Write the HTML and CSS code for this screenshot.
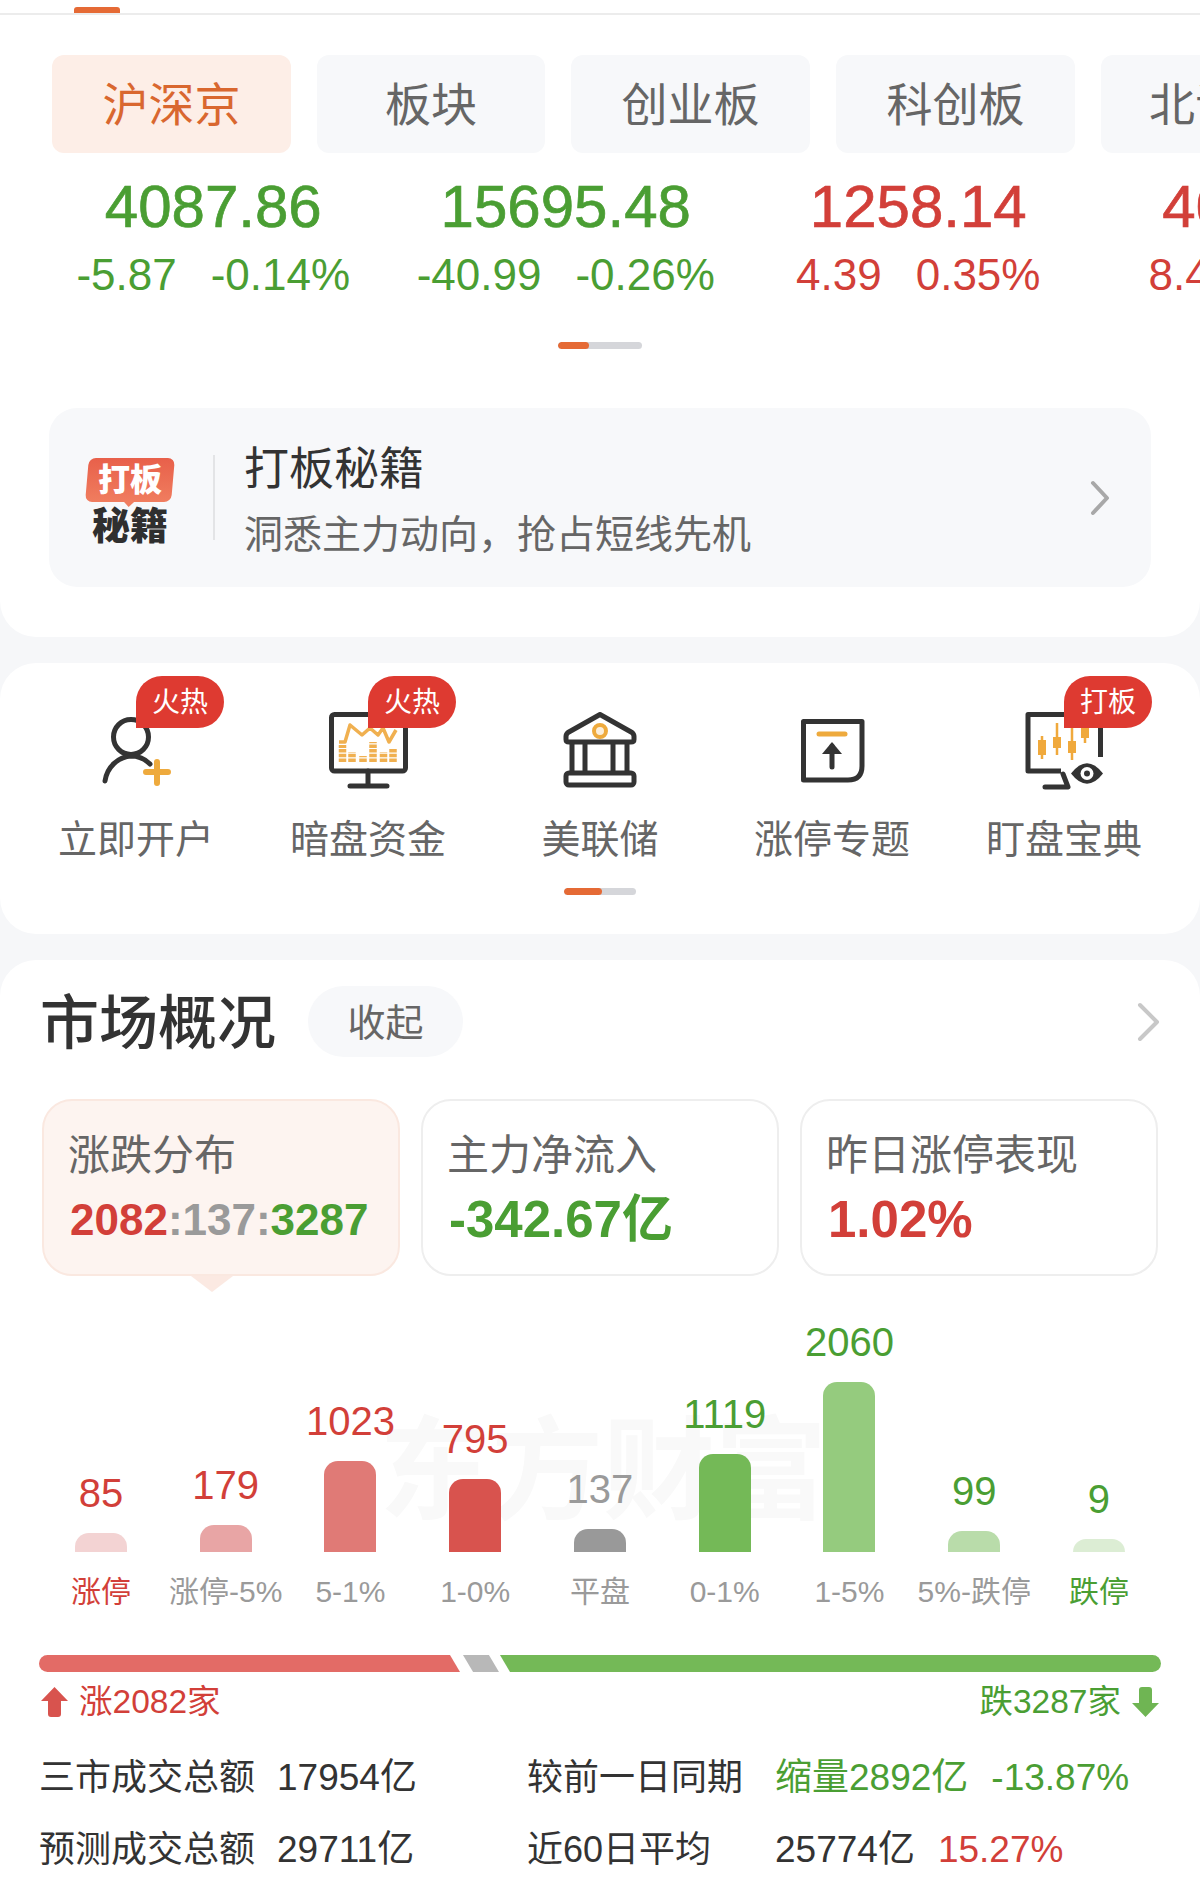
FILE: index.html
```html
<!DOCTYPE html>
<html lang="zh-CN">
<head>
	<meta charset="UTF-8">
	<title>行情</title>
	<link rel="stylesheet" href="styles.css">
</head>
<body>
	<section class="card card-first">
		<div class="topline"><span class="topline-mark"></span></div>
		<div class="tabs">
			<a class="tab active">沪深京</a>
			<a class="tab tab-short">板块</a>
			<a class="tab">创业板</a>
			<a class="tab">科创板</a>
			<a class="tab">北证50</a>
		</div>
		<div class="quotes">
			<div class="quote green">
				<div class="quote-price">4087.86</div>
				<div class="quote-change"><span>-5.87</span><span>-0.14%</span></div>
			</div>
			<div class="quote green">
				<div class="quote-price">15695.48</div>
				<div class="quote-change"><span>-40.99</span><span>-0.26%</span></div>
			</div>
			<div class="quote red">
				<div class="quote-price">1258.14</div>
				<div class="quote-change"><span>4.39</span><span>0.35%</span></div>
			</div>
			<div class="quote red">
				<div class="quote-price">4012.35</div>
				<div class="quote-change"><span>8.41</span><span>0.21%</span></div>
			</div>
		</div>
		<div class="pager pager-quotes"><i></i></div>
		<div class="banner">
			<div class="logo">
				<div class="logo-bubble"><span>打板</span></div>
				<div class="logo-text">秘籍</div>
			</div>
			<div class="banner-line"></div>
			<div class="banner-text">
				<div class="banner-title">打板秘籍</div>
				<div class="banner-sub">洞悉主力动向，抢占短线先机</div>
			</div>
			<svg class="banner-arrow" width="20" height="36" viewBox="0 0 20 36"><path d="M3 3l14 15L3 33" fill="none" stroke="#a8a8a8" stroke-width="4" stroke-linecap="round" stroke-linejoin="round"/></svg>
		</div>
	</section>

	<section class="card card-menu">
		<div class="menu">
			<div class="menu-item">
				<svg class="menu-icon" width="100" height="80" viewBox="0 0 100 80">
					<circle cx="45" cy="25" r="17.5" fill="none" stroke="#333" stroke-width="5"/>
					<path d="M19 69C21 55 32 45 45 44c8 0 14 3 19 8" fill="none" stroke="#333" stroke-width="5" stroke-linecap="round"/>
					<path d="M60 60h22M71 50v21" fill="none" stroke="#eeaa3d" stroke-width="6" stroke-linecap="round"/>
				</svg>
				<span class="badge">火热</span>
				<div class="menu-label">立即开户</div>
			</div>
			<div class="menu-item">
				<svg class="menu-icon" width="100" height="80" viewBox="0 0 100 80">
					<rect x="13.5" y="2.5" width="74" height="56.5" rx="3" fill="none" stroke="#333" stroke-width="5"/>
					<path d="M50 59v15M32 74h37" fill="none" stroke="#333" stroke-width="5" stroke-linecap="round"/>
					<path d="M21 30h6l5-17 12 10 8-7 8 7 5-7 6 14 7-12" fill="none" stroke="#f0b050" stroke-width="3.5" stroke-linejoin="round"/>
					<path d="M24.5 50V33M34 50V40M45 50V44M55 50V30M65.500 50V40M75 50V37" fill="none" stroke="#f0b050" stroke-width="7.500" stroke-dasharray="3.500 1.200"/>
				</svg>
				<span class="badge">火热</span>
				<div class="menu-label">暗盘资金</div>
			</div>
			<div class="menu-item">
				<svg class="menu-icon" width="100" height="80" viewBox="0 0 100 80">
					<path d="M50 2.500L82 20.500q2 1.500 2 4v3q0 2.500-3 2.500H19q-3 0-3-2.500v-3q0-2.500 2-4z" fill="none" stroke="#333" stroke-width="5" stroke-linejoin="round"/>
					<path d="M22 30v31M35 30v31M63 30v31M77 30v31" fill="none" stroke="#333" stroke-width="5"/>
					<rect x="16" y="61" width="68" height="12" rx="3" fill="none" stroke="#333" stroke-width="5"/>
					<circle cx="50" cy="19" r="6" fill="#fbeeda" stroke="#eeaa3d" stroke-width="4"/>
				</svg>
				<div class="menu-label">美联储</div>
				<div class="pager pager-menu"><i></i></div>
			</div>
			<div class="menu-item">
				<svg class="menu-icon" width="100" height="80" viewBox="0 0 100 80">
					<path d="M21.500 9.500H80V54q0 14-14 14H21.500z" fill="none" stroke="#333" stroke-width="5" stroke-linejoin="round"/>
					<path d="M37 22h26" fill="none" stroke="#eeaa3d" stroke-width="5" stroke-linecap="round"/>
					<path d="M50 34v21" fill="none" stroke="#333" stroke-width="5" stroke-linecap="round"/>
					<path d="M50 30l10 12H40z" fill="#333"/>
				</svg>
				<div class="menu-label">涨停专题</div>
			</div>
			<div class="menu-item">
				<svg class="menu-icon" width="100" height="80" viewBox="0 0 100 80">
					<path d="M86.500 45V2.500H14V59H47" fill="none" stroke="#333" stroke-width="5" stroke-linejoin="round"/>
					<path d="M49 62l5 13H31" fill="none" stroke="#333" stroke-width="5" stroke-linecap="round" stroke-linejoin="round"/>
					<path d="M28 24v23M43 11v32M58 16v32M71 16v15" fill="none" stroke="#f0a93c" stroke-width="2.500"/>
					<path d="M24 28h8v15h-8zM39 25h8v11h-8zM54 29h8v12h-8zM67 16h8v10h-8z" fill="#f0a93c"/>
					<path d="M57 61.500Q73 41 89 61.500 73 82 57 61.500z" fill="#333"/>
					<circle cx="73" cy="61.500" r="6.500" fill="#fff"/>
					<circle cx="73" cy="61.500" r="3" fill="#333"/>
				</svg>
				<span class="badge">打板</span>
				<div class="menu-label">盯盘宝典</div>
			</div>
		</div>
	</section>

	<section class="card card-market">
		<div class="market-head">
			<h2 class="market-title">市场概况</h2>
			<a class="market-fold">收起</a>
			<svg class="market-arrow" width="24" height="40" viewBox="0 0 24 40"><path d="M3 3l17 17L3 37" fill="none" stroke="#c8c8c8" stroke-width="4" stroke-linecap="round" stroke-linejoin="round"/></svg>
		</div>

		<div class="stats">
			<div class="stat active">
				<div class="stat-label">涨跌分布</div>
				<div class="stat-value stat-ratio"><span class="red">2082</span><span class="gray">:137:</span><span class="green">3287</span></div>
			</div>
			<div class="stat">
				<div class="stat-label">主力净流入</div>
				<div class="stat-value green">-342.67亿</div>
			</div>
			<div class="stat">
				<div class="stat-label">昨日涨停表现</div>
				<div class="stat-value red">1.02%</div>
			</div>
		</div>

		<div class="chart">
			<div class="watermark">东方财富</div>
			<div class="col"><div class="col-num red">85</div><div class="col-bar" style="height:19px;background:#f3d3d3"></div><div class="col-name red">涨停</div></div>
			<div class="col"><div class="col-num red">179</div><div class="col-bar" style="height:27px;background:#e8a5a5"></div><div class="col-name gray">涨停-5%</div></div>
			<div class="col"><div class="col-num red">1023</div><div class="col-bar" style="height:91px;background:#e07a76"></div><div class="col-name gray">5-1%</div></div>
			<div class="col"><div class="col-num red">795</div><div class="col-bar" style="height:73px;background:#d8534e"></div><div class="col-name gray">1-0%</div></div>
			<div class="col"><div class="col-num gray">137</div><div class="col-bar" style="height:23px;background:#999"></div><div class="col-name gray">平盘</div></div>
			<div class="col"><div class="col-num green">1119</div><div class="col-bar" style="height:98px;background:#74b957"></div><div class="col-name gray">0-1%</div></div>
			<div class="col"><div class="col-num green">2060</div><div class="col-bar" style="height:170px;background:#95cb7e"></div><div class="col-name gray">1-5%</div></div>
			<div class="col"><div class="col-num green">99</div><div class="col-bar" style="height:21px;background:#b9dcaa"></div><div class="col-name gray">5%-跌停</div></div>
			<div class="col"><div class="col-num green">9</div><div class="col-bar" style="height:13px;background:#dcedd4"></div><div class="col-name green">跌停</div></div>
		</div>

		<div class="ratio">
			<div class="ratio-up"></div>
			<div class="ratio-flat"></div>
			<div class="ratio-down"></div>
		</div>
		<div class="counts">
			<div class="count red">
				<svg width="27" height="30" viewBox="0 0 27 30"><path d="M13.500 0L27 14H20V27q0 3-3 3h-7q-3 0-3-3V14H0z" fill="#d8534e"/></svg>
				<span>涨2082家</span>
			</div>
			<div class="count green">
				<span>跌3287家</span>
				<svg width="27" height="30" viewBox="0 0 27 30"><path d="M13.500 30L27 16H20V3q0-3-3-3h-7q-3 0-3 3V16H0z" fill="#6fb553"/></svg>
			</div>
		</div>

		<div class="summary">
			<span>三市成交总额</span><span class="num">17954亿</span><span>较前一日同期</span><span class="num pair green"><b>缩量2892亿</b><b>-13.87%</b></span>
			<span>预测成交总额</span><span class="num">29711亿</span><span>近60日平均</span><span class="num pair"><b>25774亿</b><b class="red">15.27%</b></span>
		</div>
	</section>
</body>
</html>
```

FILE: styles.css
```css
*{margin: 0;padding: 0;box-sizing: border-box;}
html,body{width: 1200px;height: 1882px;overflow: hidden;}
body{background: #f6f7f9;color: #333;font-family: "Liberation Sans","Noto Sans CJK SC",sans-serif;}

.red{color: #d23f39;}
.green{color: #4a9e33;}
.gray{color: #9a9a9a;}

.card{background: #fff;border-radius: 36px;margin-bottom: 26px;}
.card-first{border-radius: 0 0 36px 36px;padding-bottom: 50px;}
.card-menu{padding: 49px 20px 39px;}
.card-market{border-radius: 36px 36px 0 0;padding-top: 26px;margin-bottom: 0;height: 922px;}

.topline{height: 15px;border-bottom: 2px solid #ececec;padding: 7px 0 0 74px;}
.topline-mark{display: block;width: 46px;height: 6px;background: #e56a35;border-radius: 3px 3px 0 0;}

.tabs{display: flex;gap: 26px;margin-top: 40px;padding-left: 52px;overflow: hidden;}
.tab{flex: none;width: 239px;height: 98px;line-height: 100px;border-radius: 12px;background: #f7f8fa;color: #666;font-size: 46px;text-align: center;}
.tab-short{width: 228px;}
.tab.active{background: #fdeee7;color: #d9672f;}

.quotes{display: grid;grid-template-columns: repeat(4,352.5px);margin-top: 19px;padding-left: 37px;}
.quote{text-align: center;white-space: nowrap;}
.quote-price{font-size: 60px;line-height: 70px;-webkit-text-stroke: 0.7px currentColor;}
.quote-change{display: flex;justify-content: center;gap: 34px;margin-top: 8px;font-size: 44px;line-height: 50px;}

.pager{height: 7px;border-radius: 4px;background: #d5d6da;overflow: hidden;}
.pager i{display: block;height: 100%;border-radius: 4px;background: #e56a35;}
.pager-quotes{width: 84px;margin: 42px auto 0;}
.pager-quotes i{width: 31px;}
.pager-menu{width: 72px;margin: 23px auto 0;}
.pager-menu i{width: 38px;}

.banner{display: flex;align-items: center;height: 179px;margin: 59px 49px 0;padding: 0 41px 0 38px;border-radius: 28px;background: #f7f8fa;}
.logo{flex: none;width: 86px;margin-top: 6px;text-align: center;}
.logo-bubble{position: relative;height: 44px;line-height: 44px;border-radius: 7px;background: linear-gradient(#e8604a,#f07d5f);color: #fff;font-size: 32px;font-weight: 900;transform: skewX(-5deg);}
.logo-bubble span{display: block;transform: skewX(5deg);}
.logo-bubble:after{content: "";position: absolute;left: 38px;bottom: -5px;border: 6px solid transparent;border-bottom: 0;border-top-color: #f07d5f;}
.logo-text{margin-top: 6px;color: #2f2f2f;font-size: 38px;line-height: 36px;font-weight: 900;white-space: nowrap;}
.banner-line{flex: none;width: 2px;height: 85px;margin: 0 29px 0 40px;background: #e3e4e6;}
.banner-text{margin-top: 8px;}
.banner-title{font-size: 45px;line-height: 54px;color: #333;}
.banner-sub{margin-top: 13px;font-size: 39px;line-height: 50px;color: #666;}
.banner-arrow{margin-left: auto;}

.menu{display: grid;grid-template-columns: repeat(5,232px);}
.menu-item{position: relative;text-align: center;}
.menu-icon{display: block;margin: 0 auto;}
.menu-label{margin-top: 23px;font-size: 39px;line-height: 50px;color: #666;}
.badge{position: absolute;left: 50%;top: -36px;width: 88px;height: 52px;line-height: 54px;border-radius: 26px 26px 26px 0;background: #de3a31;color: #fff;font-size: 28px;}

.market-head{display: flex;align-items: center;height: 71px;padding: 0 39px 0 40px;}
.market-title{margin-bottom: 6px;font-size: 59px;font-weight: 500;color: #333;}
.market-fold{width: 155px;height: 71px;line-height: 74px;margin-left: 32px;border-radius: 36px;background: #f7f8fa;color: #666;font-size: 38px;text-align: center;}
.market-arrow{margin-left: auto;}

.stats{display: grid;grid-template-columns: repeat(3,358px);gap: 21px;margin: 42px 0 0 42px;}
.stat{position: relative;height: 177px;padding: 30px 0 0 26px;border: 2px solid #eee;border-radius: 30px;}
.stat.active{background: #fdf4f0;border-color: #fae8e0;}
.stat.active:after{content: "";position: absolute;left: 147px;bottom: -18px;border: 21px solid transparent;border-bottom: 0;border-top: 16px solid #fbe9e2;}
.stat-label{margin-left: -2px;font-size: 42px;line-height: 50px;color: #666;}
.stat-value{margin-top: 9px;font-size: 51px;line-height: 60px;font-weight: 700;white-space: nowrap;}
.stat-ratio{font-size: 44px;}

.chart{position: relative;display: grid;grid-template-columns: repeat(9,124.75px);align-items: end;margin-top: 43px;padding-left: 38.6px;}
.watermark{position: absolute;left: 379px;top: 98px;color: #f9f9f9;font-size: 112px;line-height: 112px;font-weight: 700;white-space: nowrap;}
.col{position: relative;display: flex;flex-direction: column;align-items: center;}
.col-num{font-size: 40px;line-height: 46px;margin-bottom: 17px;}
.col-bar{width: 52px;border-radius: 14px 14px 0 0;}
.col-name{margin-top: 20px;font-size: 30px;line-height: 40px;white-space: nowrap;}

.ratio{display: flex;height: 17px;margin: 43px 39px 0 39px;}
.ratio-up{width: 421px;background: #e36b66;border-radius: 9px 0 0 9px;clip-path: polygon(0 0,411px 0,100% 100%,0 100%);}
.ratio-flat{width: 36px;margin: 0 1px 0 3px;background: #b8b8b8;clip-path: polygon(0 0,72% 0,100% 100%,28% 100%);}
.ratio-down{flex: 1;background: #74b957;border-radius: 0 9px 9px 0;clip-path: polygon(0 0,100% 0,100% 100%,10px 100%);}

.counts{display: flex;justify-content: space-between;margin-top: 10px;padding: 0 41px 0 41px;font-size: 33.5px;line-height: 40px;}
.count{display: flex;align-items: center;gap: 11px;}

.summary{display: grid;grid-template-columns: 238px 250px 248px 1fr;row-gap: 22px;margin-top: 31px;padding-left: 39px;font-size: 36px;line-height: 50px;white-space: nowrap;}
.num{font-size: 37px;}
.pair{display: flex;gap: 23px;}
.pair b{font-weight: 400;}
```
